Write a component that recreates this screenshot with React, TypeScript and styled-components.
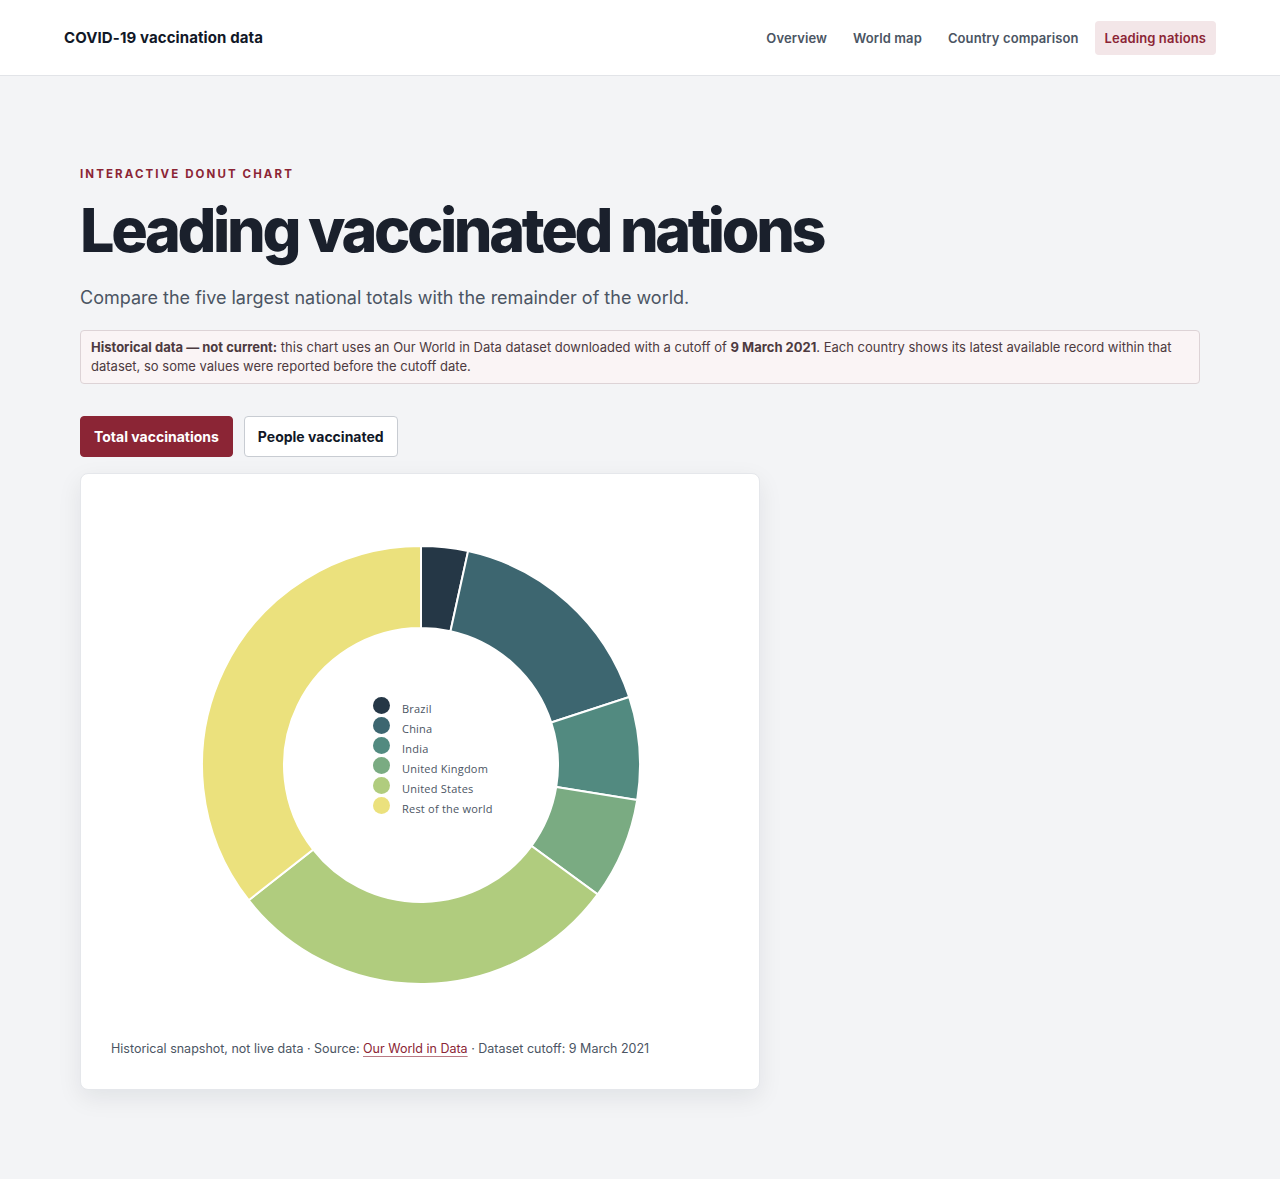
import * as React from "react";
import styled, { createGlobalStyle } from "styled-components";

const GlobalStyle = createGlobalStyle`
  * { box-sizing: border-box; }
  body {
    margin: 0;
    background: #f3f4f6;
    font-family: Inter, "Noto Sans", sans-serif;
    color: #111827;
  }
`;

const Header = styled.header`
  height: 76px;
  background: #fff;
  border-bottom: 1px solid #e2e4e8;
  display: flex;
  align-items: center;
  justify-content: space-between;
  padding: 0 64px;
`;

const Brand = styled.div`
  font-size: 15px;
  font-weight: 700;
  letter-spacing: 0.1px;
  color: #111827;
`;

const Nav = styled.nav`
  display: flex;
  gap: 6px;
`;

const NavLink = styled.a<{ $active?: boolean }>`
  font-size: 13px;
  font-weight: 600;
  letter-spacing: 0.1px;
  padding: 9px 10px;
  border-radius: 4px;
  text-decoration: none;
  color: ${(p) => (p.$active ? "#8b2535" : "#4b5563")};
  background: ${(p) => (p.$active ? "#f3e6e8" : "transparent")};
`;

const Main = styled.main`
  padding: 91px 80px 90px;
`;

const Eyebrow = styled.div`
  font-size: 11.5px;
  font-weight: 700;
  letter-spacing: 2.1px;
  color: #8b2535;
  text-transform: uppercase;
`;

const Title = styled.h1`
  margin: 16px 0 0;
  font-size: 61px;
  font-weight: 800;
  letter-spacing: -0.055em;
  line-height: 1.1;
  color: #1a202c;
`;

const Lead = styled.p`
  margin: 23px 0 0;
  font-size: 18px;
  color: #4b5563;
`;

const Notice = styled.div`
  margin-top: 22px;
  padding: 7px 10px;
  background: #faf4f5;
  border: 1px solid #ddd3d6;
  border-radius: 4px;
  font-size: 13px;
  line-height: 19px;
  color: #4d3a40;
  strong { font-weight: 700; }
`;

const Toggle = styled.div`
  display: flex;
  gap: 11px;
  margin-top: 32px;
`;

const ToggleButton = styled.button<{ $active?: boolean }>`
  height: 41px;
  padding: 0 13px;
  border-radius: 4px;
  font-family: inherit;
  font-size: 14px;
  font-weight: 700;
  cursor: pointer;
  border: 1px solid ${(p) => (p.$active ? "#8b2535" : "#c8ccd2")};
  background: ${(p) => (p.$active ? "#8b2535" : "#fff")};
  color: ${(p) => (p.$active ? "#fff" : "#111827")};
`;

const Card = styled.section`
  margin-top: 16px;
  width: 680px;
  background: #fff;
  border: 1px solid #e5e7eb;
  border-radius: 8px;
  box-shadow: 0 8px 24px rgba(17, 24, 39, 0.08);
  padding: 30px 30px 33px;
`;

const ChartBox = styled.div`
  position: relative;
  height: 522px;
`;

const Legend = styled.ul`
  position: absolute;
  left: 262px;
  top: 196px;
  margin: 0;
  padding: 0;
  list-style: none;
  display: flex;
  flex-direction: column;
  gap: 4px;
`;

const LegendItem = styled.li`
  display: flex;
  align-items: center;
  height: 16px;
  font-size: 11px;
  letter-spacing: 0.02em;
  color: #4b5563;
  font-family: "Open Sans", Inter, sans-serif;
`;

const Dot = styled.span<{ $color: string }>`
  width: 17px;
  height: 17px;
  border-radius: 50%;
  background: ${(p) => p.$color};
  margin-right: 12px;
  margin-top: -6px;
`;

const Footnote = styled.p`
  margin: 15px 0 0;
  font-size: 12.5px;
  color: #4b5563;
  a {
    color: #8b2535;
    text-decoration: underline;
    text-underline-offset: 3px;
    text-decoration-color: #b97a84;
  }
`;

const slices = [
  { label: "Brazil", value: 3.45, color: "#253746" },
  { label: "China", value: 16.53, color: "#3d6670" },
  { label: "India", value: 7.58, color: "#528a80" },
  { label: "United Kingdom", value: 7.5, color: "#7aab82" },
  { label: "United States", value: 29.35, color: "#b0cc7e" },
  { label: "Rest of the world", value: 35.59, color: "#ebe17d" },
];

const point = (cx: number, cy: number, r: number, deg: number) => {
  const a = ((deg - 90) * Math.PI) / 180;
  return [cx + r * Math.cos(a), cy + r * Math.sin(a)];
};

const arcPath = (cx: number, cy: number, ro: number, ri: number, a0: number, a1: number) => {
  const large = a1 - a0 > 180 ? 1 : 0;
  const [x0, y0] = point(cx, cy, ro, a0);
  const [x1, y1] = point(cx, cy, ro, a1);
  const [x2, y2] = point(cx, cy, ri, a1);
  const [x3, y3] = point(cx, cy, ri, a0);
  return `M${x0} ${y0} A${ro} ${ro} 0 ${large} 1 ${x1} ${y1} L${x2} ${y2} A${ri} ${ri} 0 ${large} 0 ${x3} ${y3} Z`;
};

const Donut = () => {
  const total = slices.reduce((s, d) => s + d.value, 0);
  let start = 0;
  return (
    <svg width="620" height="522" viewBox="0 0 620 522">
      {slices.map((s) => {
        const sweep = (s.value / total) * 360;
        const d = arcPath(310, 261, 219, 137, start, start + sweep);
        start += sweep;
        return <path key={s.label} d={d} fill={s.color} stroke="#fff" strokeWidth={2} />;
      })}
    </svg>
  );
};

export default function App() {
  return (
    <>
      <GlobalStyle />
      <Header>
        <Brand>COVID-19 vaccination data</Brand>
        <Nav>
          <NavLink href="#">Overview</NavLink>
          <NavLink href="#">World map</NavLink>
          <NavLink href="#">Country comparison</NavLink>
          <NavLink href="#" $active>
            Leading nations
          </NavLink>
        </Nav>
      </Header>
      <Main>
        <Eyebrow>Interactive donut chart</Eyebrow>
        <Title>Leading vaccinated nations</Title>
        <Lead>Compare the five largest national totals with the remainder of the world.</Lead>
        <Notice>
          <strong>Historical data — not current:</strong> this chart uses an Our World in Data dataset
          downloaded with a cutoff of <strong>9 March 2021</strong>. Each country shows its latest
          available record within that dataset, so some values were reported before the cutoff date.
        </Notice>
        <Toggle>
          <ToggleButton $active>Total vaccinations</ToggleButton>
          <ToggleButton>People vaccinated</ToggleButton>
        </Toggle>
        <Card>
          <ChartBox>
            <Donut />
            <Legend>
              {slices.map((s) => (
                <LegendItem key={s.label}>
                  <Dot $color={s.color} />
                  {s.label}
                </LegendItem>
              ))}
            </Legend>
          </ChartBox>
          <Footnote>
            Historical snapshot, not live data · Source: <a href="#">Our World in Data</a> · Dataset
            cutoff: 9 March 2021
          </Footnote>
        </Card>
      </Main>
    </>
  );
}
